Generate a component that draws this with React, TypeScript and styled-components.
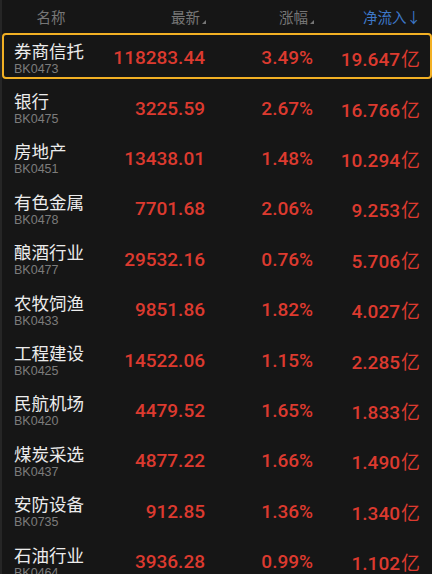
import React from "react";
import styled, { createGlobalStyle } from "styled-components";

const Global = createGlobalStyle`
  html, body { margin: 0; padding: 0; background: #161616; }
  body { width: 432px; height: 574px; overflow: hidden; font-family: "Liberation Sans", "Noto Sans CJK SC", sans-serif; }
`;

const Page = styled.div`
  width: 432px;
  height: 574px;
  background: #161616;
  overflow: hidden;
  border-left: 2px solid #262626;
  box-sizing: border-box;
`;

const Header = styled.div`
  height: 31px;
  display: grid;
  grid-template-columns: 1fr 106px 108px 107px;
  align-items: center;
  padding: 0 11px 0 0;
  font-size: 14.5px;
  color: #767676;
  font-family: "Noto Sans CJK SC", sans-serif;
`;

const HeadCell = styled.div<{ $align: "center" | "right"; $active?: boolean }>`
  text-align: ${(p) => p.$align};
  color: ${(p) => (p.$active ? "#3d78c8" : "#767676")};
  padding-top: 1px;
  white-space: nowrap;
  padding-right: ${(p) => (p.$align === "right" && !p.$active ? "0" : "0")};
`;

const Corner = styled.span`
  display: inline-block;
  width: 0;
  height: 0;
  border-left: 4px solid transparent;
  border-bottom: 4px solid #767676;
  margin-left: 2px;
  vertical-align: -1px;
`;

const Row = styled.div<{ $hl?: boolean }>`
  height: 50.4px;
  box-sizing: border-box;
  display: grid;
  grid-template-columns: 1fr 103px 108px 107px;
  align-items: center;
  padding: 0 ${(p) => (p.$hl ? "10px" : "12px")} 0 ${(p) => (p.$hl ? "10px" : "12px")};
  margin: ${(p) => (p.$hl ? "2px 0 0 0" : "0")};
  border: ${(p) => (p.$hl ? "2px solid #f2b024" : "none")};
  border-radius: 4px;
  ${(p) => (p.$hl ? "height: 46px; margin-bottom: 2.4px;" : "")}
`;

const NameCol = styled.div`
  display: flex;
  flex-direction: column;
  justify-content: center;
  transform: translateY(2px);
`;

const Name = styled.div`
  font-family: "Noto Sans CJK SC", sans-serif;
  font-size: 17.5px;
  line-height: 20px;
  color: #ececec;
  white-space: nowrap;
`;

const Code = styled.div`
  font-family: "Liberation Sans", sans-serif;
  font-size: 12.5px;
  line-height: 14px;
  color: #7c7c7c;
  margin-top: 1px;
`;

const Num = styled.div`
  text-align: right;
  font-family: "Roboto", "Liberation Sans", sans-serif;
  font-weight: 500;
  font-size: 19px;
  color: #dc3a2f;
  white-space: nowrap;
  padding-top: 3px;
`;

const Unit = styled.span`
  font-family: "Noto Sans CJK SC", sans-serif;
  font-weight: 400;
  font-size: 19px;
  margin-left: 1px;
`;

const data = [
  ["券商信托", "BK0473", "118283.44", "3.49%", "19.647"],
  ["银行", "BK0475", "3225.59", "2.67%", "16.766"],
  ["房地产", "BK0451", "13438.01", "1.48%", "10.294"],
  ["有色金属", "BK0478", "7701.68", "2.06%", "9.253"],
  ["酿酒行业", "BK0477", "29532.16", "0.76%", "5.706"],
  ["农牧饲渔", "BK0433", "9851.86", "1.82%", "4.027"],
  ["工程建设", "BK0425", "14522.06", "1.15%", "2.285"],
  ["民航机场", "BK0420", "4479.52", "1.65%", "1.833"],
  ["煤炭采选", "BK0437", "4877.22", "1.66%", "1.490"],
  ["安防设备", "BK0735", "912.85", "1.36%", "1.340"],
  ["石油行业", "BK0464", "3936.28", "0.99%", "1.102"],
];

export default function App() {
  return (
    <>
      <Global />
      <Page>
        <Header>
          <HeadCell $align="center">名称</HeadCell>
          <HeadCell $align="right">
            最新
            <Corner />
          </HeadCell>
          <HeadCell $align="right">
            涨幅
            <Corner />
          </HeadCell>
          <HeadCell $align="right" $active>
            净流入↓
          </HeadCell>
        </Header>
        {data.map((d, i) => (
          <Row key={d[1]} $hl={i === 0}>
            <NameCol>
              <Name>{d[0]}</Name>
              <Code>{d[1]}</Code>
            </NameCol>
            <Num>{d[2]}</Num>
            <Num>{d[3]}</Num>
            <Num>
              {d[4]}
              <Unit>亿</Unit>
            </Num>
          </Row>
        ))}
      </Page>
    </>
  );
}
